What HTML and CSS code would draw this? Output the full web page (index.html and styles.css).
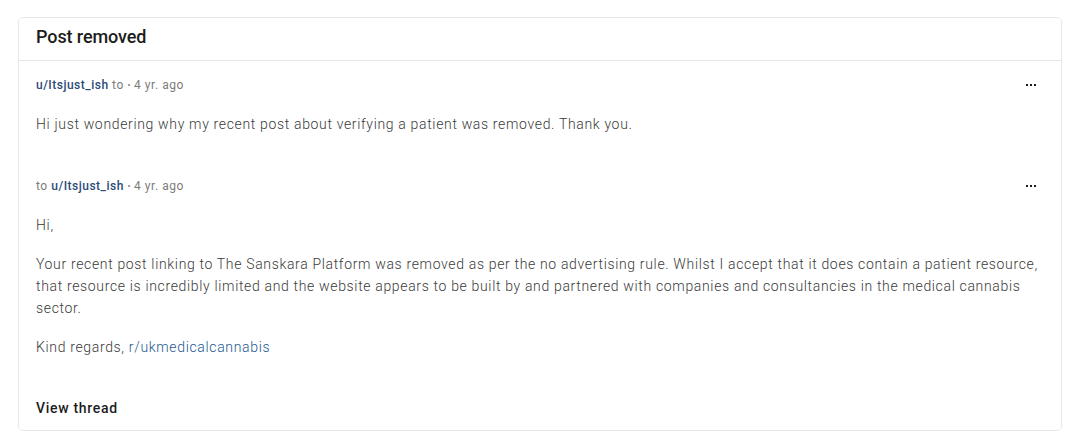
FILE: index.html
```html
<!DOCTYPE html>
<html>
<head>
<meta charset="utf-8">
<link rel="stylesheet" href="styles.css">
</head>
<body>
<div class="card">
  <div class="card-header">Post removed</div>
  <div class="message">
    <div class="meta-row">
      <div class="meta"><a class="user">u/Itsjust_ish</a> to <span class="dot">•</span> <span class="time">4 yr. ago</span></div>
      <svg class="more" width="10" height="2" viewBox="0 0 10 2"><rect x="0" y="0" width="2" height="2"/><rect x="4" y="0" width="2" height="2"/><rect x="8" y="0" width="2" height="2"/></svg>
    </div>
    <div class="body">
      <p>Hi just wondering why my recent post about verifying a patient was removed. Thank you.</p>
    </div>
  </div>
  <div class="message">
    <div class="meta-row">
      <div class="meta">to <a class="user">u/Itsjust_ish</a> <span class="dot">•</span> <span class="time">4 yr. ago</span></div>
      <svg class="more" width="10" height="2" viewBox="0 0 10 2"><rect x="0" y="0" width="2" height="2"/><rect x="4" y="0" width="2" height="2"/><rect x="8" y="0" width="2" height="2"/></svg>
    </div>
    <div class="body">
      <p>Hi,</p>
      <p>Your recent post linking to The Sanskara Platform was removed as per the no advertising rule. Whilst I accept that it does contain a patient resource, that resource is incredibly limited and the website appears to be built by and partnered with companies and consultancies in the medical cannabis sector.</p>
      <p>Kind regards, <a class="link">r/ukmedicalcannabis</a></p>
    </div>
  </div>
  <div class="footer">View thread</div>
</div>
</body>
</html>
```
FILE: styles.css
```css
* { box-sizing: border-box; }
body {
  margin: 0;
  background: #ffffff;
  font-family: Roboto, "Noto Sans", sans-serif;
}
.card {
  margin: 17px 18px 0 18px;
  height: 414px;
  border: 1px solid #e7e8ea;
  border-radius: 5px;
  background: #fff;
  display: flex;
  flex-direction: column;
}
.card-header {
  height: 43px;
  padding: 8px 17px 0;
  font-size: 18px;
  line-height: 22px;
  font-weight: 500;
  letter-spacing: -0.1px;
  color: #1c1c1c;
  border-bottom: 1px solid #e7e8ea;
}
.message {
  padding: 16px 17px 0 17px;
}
.message + .message { padding-top: 43px; }
.meta-row {
  display: flex;
  justify-content: space-between;
  align-items: center;
  height: 16px;
}
.meta {
  font-size: 12px;
  letter-spacing: 0.55px;
  color: #7c7c7c;
}
.meta .user {
  color: #2a4a78;
  font-weight: 500;
  letter-spacing: 0.5px;
}
.meta .dot { font-size: 9px; position: relative; top: -1px; letter-spacing: 0; }
.more {
  fill: #1c1c1c;
  margin-right: 8px;
}
.body {
  padding-top: 20px;
}
.body p {
  margin: 0 0 17px 0;
  font-size: 14px;
  line-height: 22px;
  font-weight: 300;
  letter-spacing: 0.66px;
  color: #3a3a3a;
}
.body p:last-child { margin-bottom: 0; }
.link { color: #24578f; }
.footer {
  margin-top: auto;
  padding: 0 17px 12px;
  font-size: 14px;
  font-weight: 500;
  letter-spacing: 0.7px;
  color: #1c1c1c;
  line-height: 20px;
}
```
